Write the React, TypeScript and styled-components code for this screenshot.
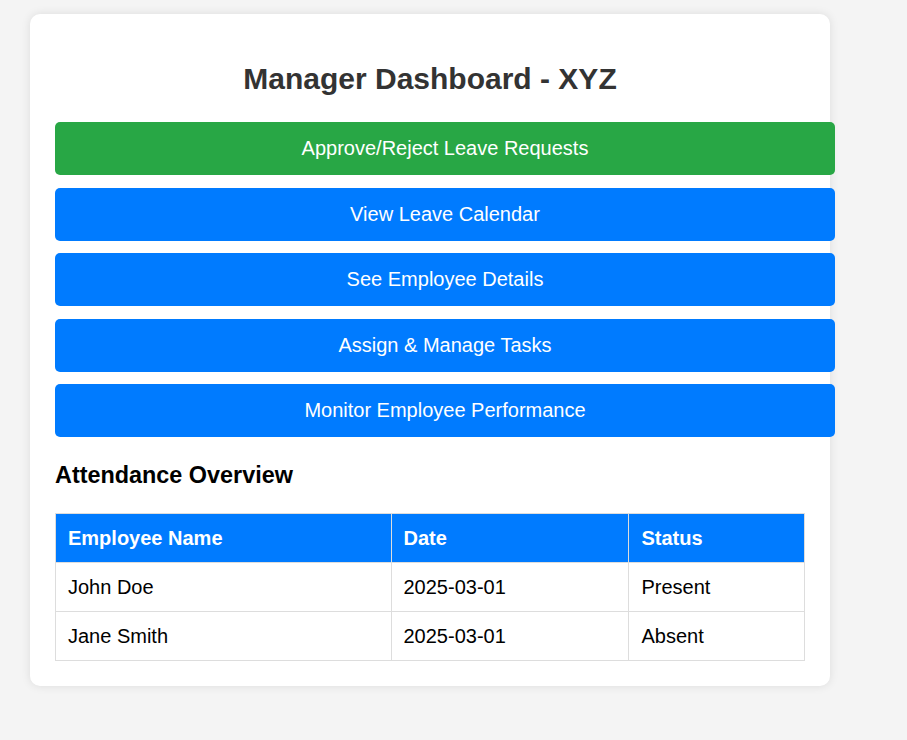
import React from "react";
import styled, { createGlobalStyle } from "styled-components";

const GlobalStyle = createGlobalStyle`
  html, body {
    margin: 0;
    padding: 0;
    background: #f4f4f4;
    font-family: "Liberation Sans", Arial, sans-serif;
  }
  * { box-sizing: border-box; }
`;

const Page = styled.div`
  padding: 14px 0 40px 30px;
  min-height: 740px;
`;

const Card = styled.div`
  width: 800px;
  background: #ffffff;
  border-radius: 10px;
  padding: 25px;
  box-shadow: 0 0 10px rgba(0, 0, 0, 0.1);
`;

const Title = styled.h1`
  margin: 23px 0 26px;
  font-size: 30px;
  font-weight: bold;
  color: #333;
  text-align: center;
  line-height: normal;
`;

const ButtonList = styled.div`
  display: flex;
  flex-direction: column;
  gap: 12.5px;
`;

const ActionButton = styled.button<{ $variant?: "green" | "blue" }>`
  display: block;
  width: calc(100% + 30px);
  padding: 15px;
  border: none;
  border-radius: 5px;
  background: ${(p) => (p.$variant === "green" ? "#28a745" : "#007bff")};
  color: #ffffff;
  font-family: "Liberation Sans", Arial, sans-serif;
  font-size: 20px;
  line-height: 23px;
  text-align: center;
  cursor: pointer;
`;

const SectionTitle = styled.h3`
  margin: 25px 0 24px;
  font-size: 23.4px;
  font-weight: bold;
  color: #000;
  line-height: normal;
`;

const Table = styled.table`
  width: 100%;
  border-collapse: collapse;
  font-size: 20px;
`;

const HeadCell = styled.th`
  background: #007bff;
  color: #ffffff;
  font-weight: bold;
  text-align: left;
  border: 1px solid #ddd;
  padding: 12.5px 12px;
  line-height: 23px;
`;

const Cell = styled.td`
  border: 1px solid #ddd;
  padding: 12.5px 12px;
  line-height: 23px;
  color: #000;
`;

const actions = [
  { label: "Approve/Reject Leave Requests", variant: "green" as const },
  { label: "View Leave Calendar", variant: "blue" as const },
  { label: "See Employee Details", variant: "blue" as const },
  { label: "Assign & Manage Tasks", variant: "blue" as const },
  { label: "Monitor Employee Performance", variant: "blue" as const },
];

const rows = [
  { name: "John Doe", date: "2025-03-01", status: "Present" },
  { name: "Jane Smith", date: "2025-03-01", status: "Absent" },
];

export default function App() {
  return (
    <>
      <GlobalStyle />
      <Page>
        <Card>
          <Title>Manager Dashboard - XYZ</Title>
          <ButtonList>
            {actions.map((a) => (
              <ActionButton key={a.label} $variant={a.variant}>
                {a.label}
              </ActionButton>
            ))}
          </ButtonList>
          <SectionTitle>Attendance Overview</SectionTitle>
          <Table>
            <thead>
              <tr>
                <HeadCell>Employee Name</HeadCell>
                <HeadCell>Date</HeadCell>
                <HeadCell>Status</HeadCell>
              </tr>
            </thead>
            <tbody>
              {rows.map((r) => (
                <tr key={r.name}>
                  <Cell>{r.name}</Cell>
                  <Cell>{r.date}</Cell>
                  <Cell>{r.status}</Cell>
                </tr>
              ))}
            </tbody>
          </Table>
        </Card>
      </Page>
    </>
  );
}
